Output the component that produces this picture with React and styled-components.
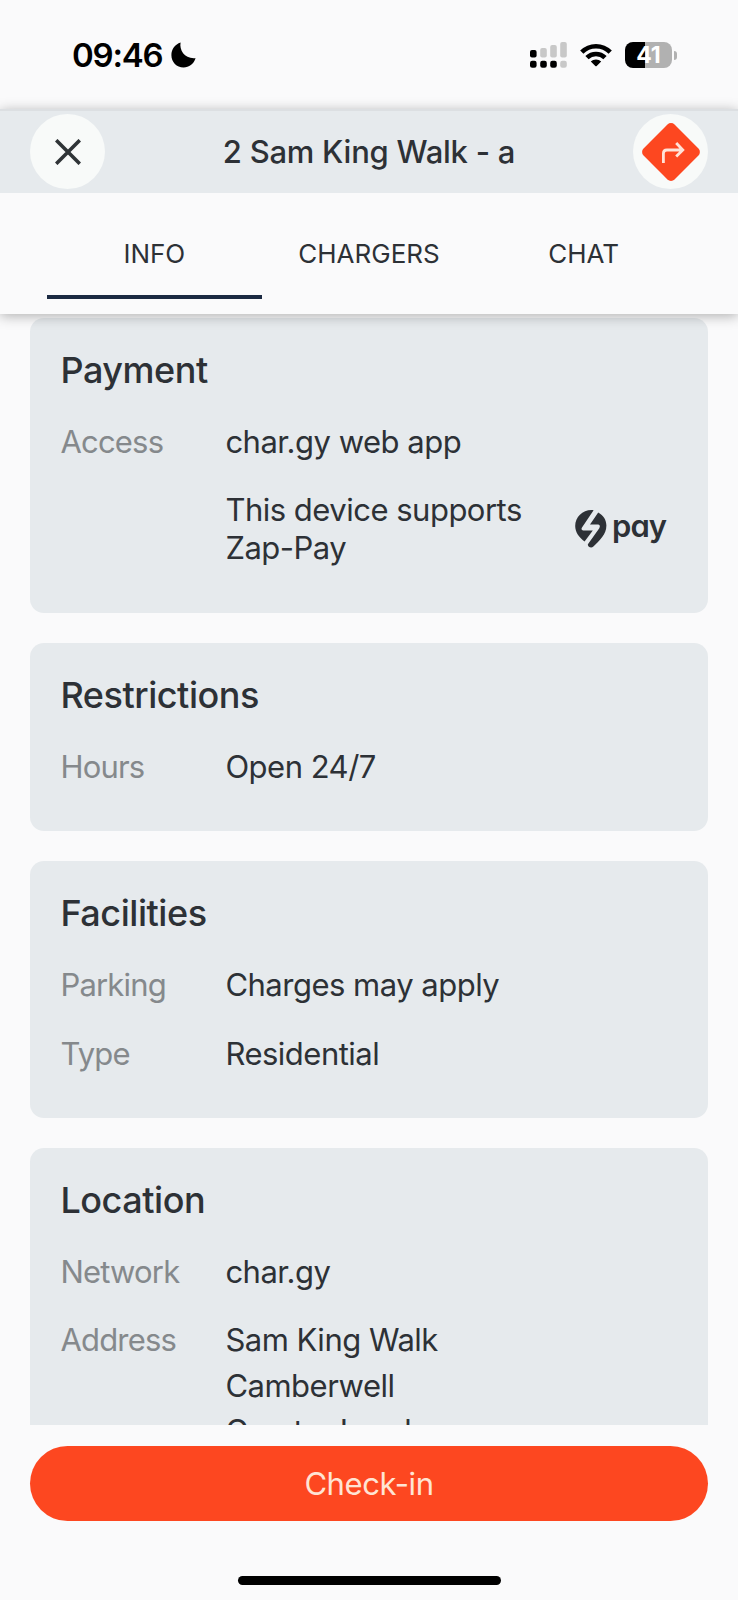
import React from "react";
import styled, { createGlobalStyle } from "styled-components";

const TABS = ["INFO", "CHARGERS", "CHAT"];

function App() {
  const [active, setActive] = React.useState("INFO");

  return (
    <>
      <GlobalStyle />
      <Screen>
        <StatusBar>
          <Clock>
            09:46
            <MoonIcon />
          </Clock>
          <StatusIcons>
            <SignalIcon />
            <WifiIcon />
            <Battery>
              <BatteryBody>41</BatteryBody>
              <BatteryCap />
            </Battery>
          </StatusIcons>
        </StatusBar>

        <Header>
          <TitleBar>
            <RoundButton aria-label="Close">
              <CloseIcon />
            </RoundButton>
            <Title>2 Sam King Walk - a</Title>
            <RoundButton aria-label="Directions">
              <DirectionsIcon />
            </RoundButton>
          </TitleBar>
          <Tabs>
            {TABS.map((tab) => (
              <Tab
                key={tab}
                $active={tab === active}
                onClick={() => setActive(tab)}
              >
                {tab}
              </Tab>
            ))}
          </Tabs>
        </Header>

        <Content>
          <Card>
            <CardTitle>Payment</CardTitle>
            <Row>
              <Label>Access</Label>
              <Value>char.gy web app</Value>
            </Row>
            <Row>
              <Label />
              <Value>
                This device supports
                <br />
                Zap-Pay
              </Value>
              <ZapPay>
                <ZapIcon />
                <PayText>pay</PayText>
              </ZapPay>
            </Row>
          </Card>

          <Card>
            <CardTitle>Restrictions</CardTitle>
            <Row>
              <Label>Hours</Label>
              <Value>Open 24/7</Value>
            </Row>
          </Card>

          <Card>
            <CardTitle>Facilities</CardTitle>
            <Row>
              <Label>Parking</Label>
              <Value>Charges may apply</Value>
            </Row>
            <Row>
              <Label>Type</Label>
              <Value>Residential</Value>
            </Row>
          </Card>

          <Card>
            <CardTitle>Location</CardTitle>
            <Row>
              <Label>Network</Label>
              <Value>char.gy</Value>
            </Row>
            <Row>
              <Label>Address</Label>
              <Address>
                <span>Sam King Walk</span>
                <span>Camberwell</span>
                <span>Greater London</span>
              </Address>
            </Row>
          </Card>
        </Content>

        <Footer>
          <CheckInButton>Check-in</CheckInButton>
          <HomeIndicator />
        </Footer>
      </Screen>
    </>
  );
}

const MoonIcon = () => (
  <svg width="25" height="26" viewBox="0 0 25 26">
    <path
      d="M9.6 0.6C8 8.6 14.2 17.4 24.6 16.2C22.6 22 18 25.4 12.6 25.4C5.6 25.4 0.4 20 0.4 13.2C0.4 7.4 4 2.4 9.6 0.6Z"
      fill="#000"
    />
  </svg>
);

const SignalIcon = () => (
  <svg width="37" height="26" viewBox="0 0 37 26">
    <rect x="0" y="8" width="6.6" height="7.4" rx="2" fill="#000" />
    <rect x="10.2" y="6" width="6.6" height="9.4" rx="2" fill="#c8c8c8" />
    <rect x="20.2" y="3" width="6.6" height="12.4" rx="2" fill="#c8c8c8" />
    <rect x="30.2" y="0" width="6.6" height="15.4" rx="2" fill="#c8c8c8" />
    <rect x="0" y="18.8" width="6.6" height="7" rx="2.2" fill="#000" />
    <rect x="10.2" y="18.8" width="6.6" height="7" rx="2.2" fill="#000" />
    <rect x="20.2" y="18.8" width="6.6" height="7" rx="2.2" fill="#000" />
    <rect x="30.2" y="18.8" width="6.6" height="7" rx="2.2" fill="#c8c8c8" />
  </svg>
);

const WifiIcon = () => (
  <svg width="32" height="24" viewBox="0 0 32 24">
    <g fill="none" stroke="#000" strokeWidth="4.6">
      <path d="M1.8 9.2C9.6 1.2 22.4 1.2 30.2 9.2" />
      <path d="M7 14.7C12 9.7 20 9.7 25 14.7" />
    </g>
    <path
      d="M10.8 18.5C13.6 15.8 18.4 15.8 21.2 18.5L16.7 23Q16 23.7 15.3 23Z"
      fill="#000"
    />
  </svg>
);

const CloseIcon = () => (
  <svg width="26" height="26" viewBox="0 0 26 26">
    <path
      d="M1.2 1.2L24.8 24.8M24.8 1.2L1.2 24.8"
      stroke="#2f3437"
      strokeWidth="3.6"
    />
  </svg>
);

const DirectionsIcon = () => (
  <svg width="60" height="60" viewBox="0 0 60 60">
    <rect
      x="8.1"
      y="8.1"
      width="43.8"
      height="43.8"
      rx="5"
      transform="rotate(45 30 30)"
      fill="#fd4720"
    />
    <path
      d="M22.4 41V31.5Q22.4 28 25.9 28H41M35.2 21L41.8 28L35.2 34.6"
      fill="none"
      stroke="#ffe3d8"
      strokeWidth="2.8"
    />
  </svg>
);

const ZapIcon = () => (
  <svg width="32" height="38" viewBox="0 0 32 38">
    <path
      d="M18.6 0.2C8.5-1 0.2 6.6 0.2 16C0.2 22.5 4.3 27.5 9.6 31.6L17.8 20.4H8.3Q5.6 20 7 17.4Z"
      fill="#2d3136"
    />
    <path
      d="M23.2 2.4C28.5 5.3 31.4 10 31.4 15.6C31.4 24.6 24.6 30.5 18.4 36.6C16 38.7 12.4 36.7 12.9 34.2L24.3 18.2Q25.8 15.2 23.2 14.6H15Z"
      fill="#2d3136"
    />
  </svg>
);

const GlobalStyle = createGlobalStyle`
  * {
    box-sizing: border-box;
  }

  body {
    margin: 0;
    background: #fafafb;
    font-family: Inter, Roboto, sans-serif;
    color: #2d3136;
  }

  button {
    border: 0;
    padding: 0;
    background: none;
    font: inherit;
    color: inherit;
  }

  svg {
    display: block;
    flex-shrink: 0;
  }
`;

const Screen = styled.div`
  display: flex;
  flex-direction: column;
  width: 738px;
  height: 1600px;
  overflow: hidden;
  background: #fafafb;
`;

const StatusBar = styled.div`
  display: flex;
  justify-content: space-between;
  height: 109px;
  padding: 42px 61px 0 72px;
`;

const Clock = styled.div`
  display: flex;
  align-items: center;
  gap: 8px;
  height: 26px;
  font-size: 33px;
  font-weight: 600;
  letter-spacing: -1.2px;
  color: #000;
`;

const StatusIcons = styled.div`
  display: flex;
  align-items: center;
  gap: 13px;
  height: 26px;
`;

const Battery = styled.div`
  display: flex;
  align-items: center;
  gap: 2px;
`;

const BatteryBody = styled.div`
  width: 47px;
  height: 26px;
  border-radius: 8px;
  background: linear-gradient(to right, #000 20px, #b1b1b1 20px);
  color: #fff;
  font-size: 23px;
  font-weight: 650;
  line-height: 26px;
  text-align: center;
`;

const BatteryCap = styled.div`
  width: 3px;
  height: 9px;
  border-radius: 0 4px 4px 0;
  background: #b1b1b1;
`;

const Header = styled.header`
  position: relative;
  z-index: 1;
  background: #fafafb;
  box-shadow: 0 2px 12px rgba(0, 0, 0, 0.3);
`;

const TitleBar = styled.div`
  display: flex;
  align-items: flex-start;
  justify-content: space-between;
  height: 84px;
  padding: 3.4px 30px 0;
  border-top: 2px solid #dcdfe2;
  background: #e6eaed;
`;

const RoundButton = styled.button`
  display: flex;
  align-items: center;
  justify-content: center;
  width: 75px;
  height: 75px;
  border-radius: 50%;
  background: #f8faf9;
`;

const Title = styled.h1`
  margin: 0;
  font-size: 31px;
  font-weight: 450;
  line-height: 76px;
  letter-spacing: -0.25px;
`;

const Tabs = styled.nav`
  display: flex;
  height: 121px;
  padding: 15px 47px;
`;

const Tab = styled.button`
  flex: 1;
  padding-top: 3px;
  border-bottom: 4px solid ${({ $active }) => ($active ? "#1b2a42" : "transparent")};
  font-size: 26px;
  font-weight: 430;
`;

const Content = styled.main`
  display: flex;
  flex-direction: column;
  flex: 1;
  gap: 30px;
  min-height: 0;
  padding: 3.9px 30px 0;
  overflow: hidden;
`;

const Card = styled.section`
  flex-shrink: 0;
  padding: 30px 30px 45.1px 30.4px;
  border-radius: 14px;
  background: #e6eaed;
`;

const CardTitle = styled.h2`
  margin: 0;
  font-size: 36px;
  font-weight: 500;
  line-height: 45px;
  letter-spacing: -0.45px;
`;

const Row = styled.div`
  display: flex;
  margin-top: 30.3px;
  font-size: 31px;
  line-height: 38px;
  letter-spacing: -0.5px;
`;

const Label = styled.div`
  width: 165px;
  flex-shrink: 0;
  color: #85898c;
  letter-spacing: -0.8px;
`;

const Value = styled.div`
  flex: 1;
`;

const Address = styled(Value)`
  display: flex;
  flex-direction: column;
  gap: 7.3px;
`;

const ZapPay = styled.div`
  display: flex;
  align-items: center;
  gap: 5px;
  margin-right: 12px;
`;

const PayText = styled.span`
  padding-bottom: 6px;
  font-size: 31px;
  font-weight: 600;
  letter-spacing: -1px;
  font-feature-settings: "cv11";
`;

const Footer = styled.footer`
  display: flex;
  flex-direction: column;
  justify-content: space-between;
  align-items: center;
  height: 175px;
  padding: 21px 30px 15px;
`;

const CheckInButton = styled.button`
  width: 100%;
  height: 75px;
  border-radius: 38px;
  background: #fd4720;
  color: #ffe4d4;
  font-size: 31px;
  letter-spacing: -0.4px;
`;

const HomeIndicator = styled.div`
  width: 263px;
  height: 9px;
  border-radius: 5px;
  background: #000;
`;

export default App;
